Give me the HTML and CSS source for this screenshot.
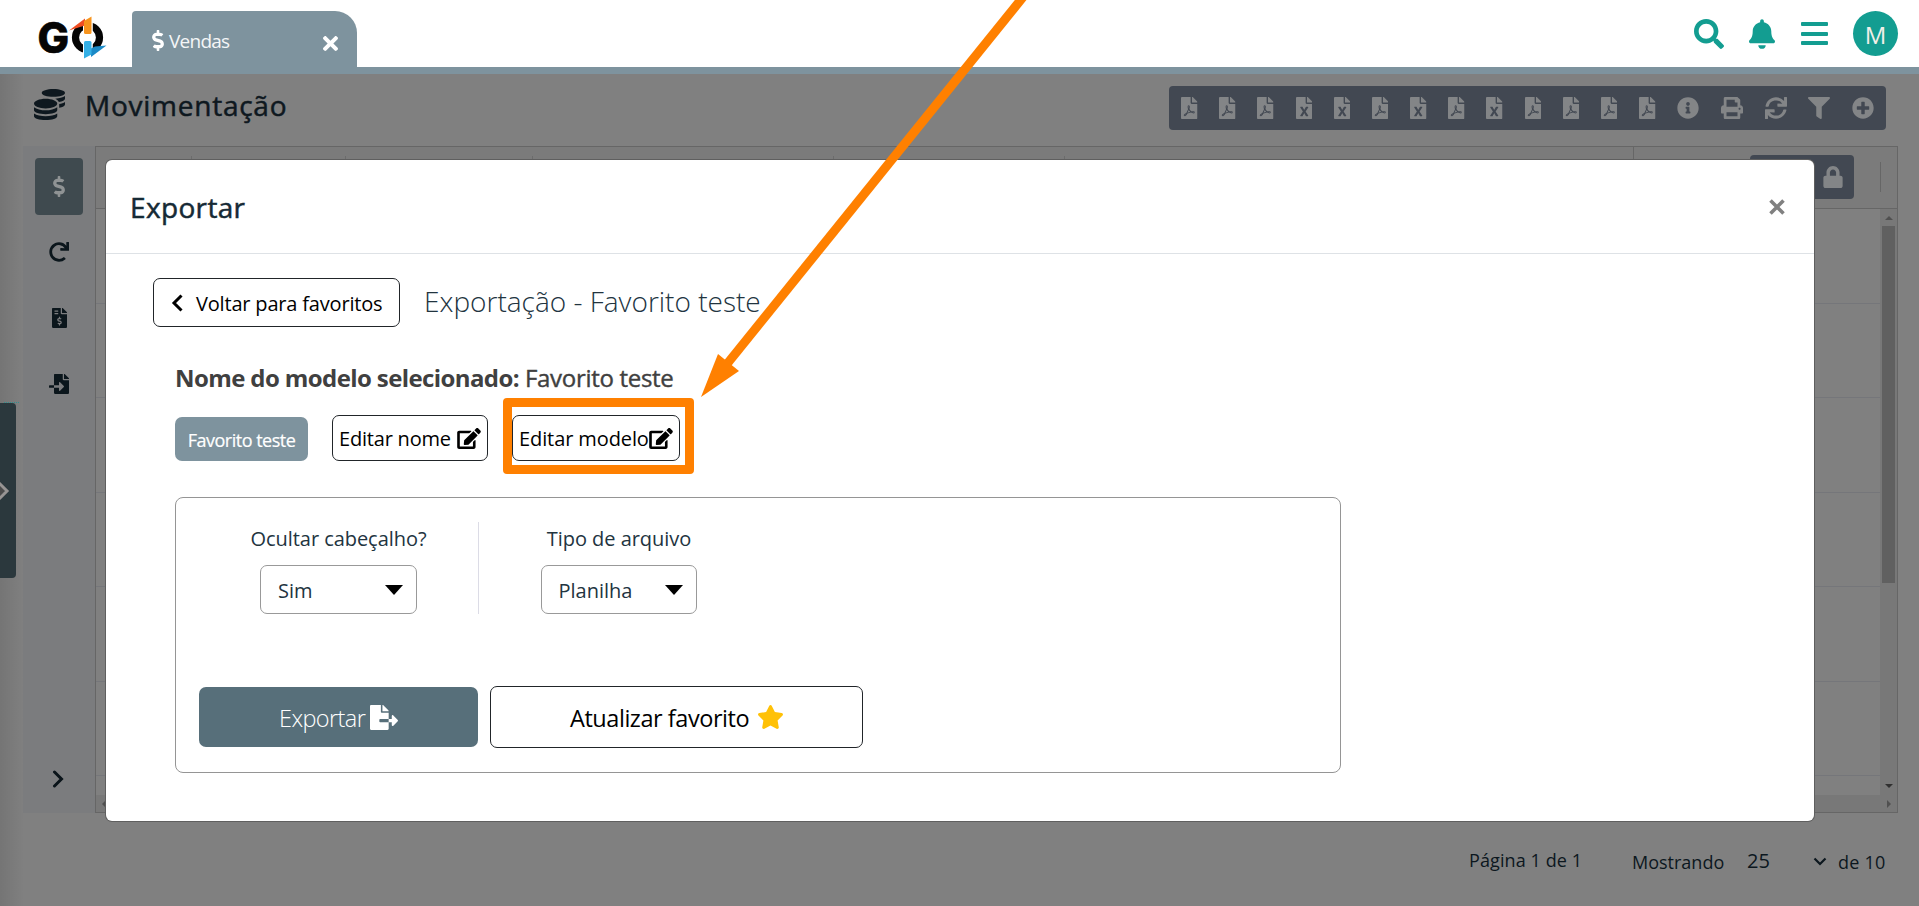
FILE: index.html
```html
<!DOCTYPE html>
<html lang="pt-BR">
<head>
<meta charset="utf-8">
<title>Vendas</title>
<link rel="stylesheet" href="styles.css">
</head>
<body>
<svg class="defs" width="0" height="0">
  <symbol id="pdf" viewBox="0 0 384 512"><path d="M181.9 256.1c-5-16-4.9-46.9-2-46.9 8.4 0 7.6 36.9 2 46.9zm-1.7 47.2c-7.7 20.2-17.3 43.3-28.4 62.7 18.3-7 39-17.2 62.9-21.9-12.7-9.6-24.9-23.4-34.5-40.8zM86.1 428.1c0 .8 13.2-5.4 34.9-40.2-6.7 6.3-29.1 24.5-34.9 40.2zM248 160h136v328c0 13.3-10.7 24-24 24H24c-13.3 0-24-10.7-24-24V24C0 10.7 10.7 0 24 0h200v136c0 13.2 10.8 24 24 24zm-8 171.8c-20-12.2-33.3-29-42.7-53.8 4.5-18.5 11.6-46.6 6.2-64.2-4.7-29.4-42.4-26.5-47.8-6.8-5 18.3-.4 44.1 8.1 77-11.6 27.6-28.7 64.6-40.8 85.8-.1 0-.1.1-.2.1-27.1 13.9-73.6 44.5-54.5 68 5.6 6.9 16 10 21.5 10 17.9 0 35.7-18 61.1-61.8 25.8-8.5 54.1-19.1 79-23.2 21.7 11.8 47.1 19.5 64 19.5 29.2 0 31.2-32 19.7-43.4-13.9-13.6-54.3-9.7-73.6-7.2zM377 105L279 7c-4.5-4.5-10.6-7-17-7h-6v128h128v-6.1c0-6.3-2.5-12.4-7-16.9zm-74.1 255.3c4.1-2.7-2.5-11.9-42.8-9 37.1 15.8 42.8 9 42.8 9z"/></symbol>
  <symbol id="xls" viewBox="0 0 384 512"><path d="M224 136V0H24C10.7 0 0 10.7 0 24v464c0 13.3 10.7 24 24 24h336c13.3 0 24-10.7 24-24V160H248c-13.2 0-24-10.8-24-24zm60.1 106.5L224 336l60.1 93.5c5.1 8-.6 18.5-10.1 18.5h-34.9c-4.4 0-8.5-2.4-10.6-6.3C208.9 405.5 192 373 192 373c-6.4 14.8-10 20-36.6 68.8-2.1 3.9-6.1 6.3-10.5 6.3H110c-9.5 0-15.2-10.5-10.1-18.5l60.3-93.5-60.3-93.5c-5.2-8 .6-18.5 10.1-18.5h34.8c4.4 0 8.5 2.4 10.6 6.3 26.1 48.8 20 33.6 36.6 68.5 0 0 6.1-11.7 36.6-68.5 2.1-3.9 6.2-6.3 10.6-6.3H274c9.5-.1 15.2 10.4 10.1 18.4zM384 121.9v6.1H256V0h6.1c6.4 0 12.5 2.5 17 7l97.9 98c4.5 4.5 7 10.6 7 16.9z"/></symbol>
  <symbol id="info" viewBox="0 0 512 512"><path d="M256 8C119.043 8 8 119.083 8 256c0 136.997 111.043 248 248 248s248-111.003 248-248C504 119.083 392.957 8 256 8zm0 110c23.196 0 42 18.804 42 42s-18.804 42-42 42-42-18.804-42-42 18.804-42 42-42zm56 254c0 6.627-5.373 12-12 12h-88c-6.627 0-12-5.373-12-12v-24c0-6.627 5.373-12 12-12h12v-64h-12c-6.627 0-12-5.373-12-12v-24c0-6.627 5.373-12 12-12h64c6.627 0 12 5.373 12 12v100h12c6.627 0 12 5.373 12 12v24z"/></symbol>
  <symbol id="print" viewBox="0 0 512 512"><path d="M448 192V77.25c0-8.49-3.37-16.62-9.37-22.63L393.37 9.37c-6-6-14.14-9.37-22.63-9.37H96C78.33 0 64 14.33 64 32v160c-35.35 0-64 28.65-64 64v112c0 8.84 7.16 16 16 16h48v96c0 17.67 14.33 32 32 32h320c17.67 0 32-14.33 32-32v-96h48c8.84 0 16-7.16 16-16V256c0-35.35-28.65-64-64-64zm-64 256H128v-96h256v96zm0-224H128V64h192v48c0 8.84 7.16 16 16 16h48v96zm48 72c-13.25 0-24-10.75-24-24 0-13.26 10.75-24 24-24s24 10.74 24 24c0 13.25-10.75 24-24 24z"/></symbol>
  <symbol id="sync" viewBox="0 0 512 512"><path d="M440.65 12.57l4 82.77A247.16 247.16 0 0 0 255.83 8C134.73 8 33.91 94.92 12.29 209.82A12 12 0 0 0 24.09 224h49.05a12 12 0 0 0 11.67-9.26 175.91 175.91 0 0 1 317-56.94l-101.46-4.86a12 12 0 0 0-12.57 12v47.41a12 12 0 0 0 12 12H500a12 12 0 0 0 12-12V12a12 12 0 0 0-12-12h-47.37a12 12 0 0 0-11.98 12.57zM255.83 432a175.61 175.61 0 0 1-146-77.8l101.8 4.87a12 12 0 0 0 12.57-12v-47.4a12 12 0 0 0-12-12H12a12 12 0 0 0-12 12V500a12 12 0 0 0 12 12h47.35a12 12 0 0 0 12-12.6l-4.15-82.57A247.17 247.17 0 0 0 255.83 504c121.11 0 221.93-86.92 243.55-201.82a12 12 0 0 0-11.8-14.18h-49.05a12 12 0 0 0-11.67 9.26A175.86 175.86 0 0 1 255.83 432z"/></symbol>
  <symbol id="redo" viewBox="0 0 512 512"><path d="M500.33 0h-47.41a12 12 0 0 0-12 12.57l4 82.76A247.42 247.42 0 0 0 256 8C119.34 8 7.9 119.53 8 256.19 8.1 393.07 119.1 504 256 504a247.1 247.1 0 0 0 166.18-63.91 12 12 0 0 0 .48-17.43l-34-34a12 12 0 0 0-16.38-.55A176 176 0 1 1 402.1 157.8l-101.53-4.87a12 12 0 0 0-12.57 12v47.41a12 12 0 0 0 12 12h200.33a12 12 0 0 0 12-12V12a12 12 0 0 0-12-12z"/></symbol>
  <symbol id="filter" viewBox="0 0 512 512"><path d="M487.976 0H24.028C2.71 0-8.047 25.866 7.058 40.971L192 225.941V432c0 7.831 3.821 15.17 10.237 19.662l80 55.98C298.02 518.69 320 507.493 320 487.98V225.941l184.947-184.97C520.021 25.896 509.338 0 487.976 0z"/></symbol>
  <symbol id="plus" viewBox="0 0 512 512"><path d="M256 8C119 8 8 119 8 256s111 248 248 248 248-111 248-248S393 8 256 8zm144 276c0 6.6-5.4 12-12 12h-92v92c0 6.6-5.4 12-12 12h-56c-6.6 0-12-5.4-12-12v-92h-92c-6.6 0-12-5.4-12-12v-56c0-6.6 5.4-12 12-12h92v-92c0-6.6 5.4-12 12-12h56c6.6 0 12 5.4 12 12v92h92c6.6 0 12 5.4 12 12v56z"/></symbol>
  <symbol id="lock" viewBox="0 0 448 512"><path d="M400 224h-24v-72C376 68.2 307.8 0 224 0S72 68.2 72 152v72H48c-26.5 0-48 21.5-48 48v192c0 26.5 21.5 48 48 48h352c26.5 0 48-21.5 48-48V272c0-26.5-21.5-48-48-48zm-104 0H152v-72c0-39.7 32.3-72 72-72s72 32.3 72 72v72z"/></symbol>
  <symbol id="search" viewBox="0 0 512 512"><path d="M505 442.7L405.3 343c-4.5-4.5-10.6-7-17-7H372c27.6-35.3 44-79.7 44-128C416 93.1 322.9 0 208 0S0 93.1 0 208s93.1 208 208 208c48.3 0 92.7-16.4 128-44v16.3c0 6.4 2.5 12.5 7 17l99.7 99.7c9.4 9.4 24.6 9.4 33.9 0l28.3-28.3c9.4-9.4 9.4-24.6.1-34zM208 336c-70.7 0-128-57.2-128-128 0-70.7 57.2-128 128-128 70.7 0 128 57.2 128 128 0 70.7-57.2 128-128 128z"/></symbol>
  <symbol id="bell" viewBox="0 0 448 512"><path d="M224 512c35.32 0 63.97-28.65 63.97-64H160.03c0 35.35 28.65 64 63.97 64zm215.39-149.71c-19.32-20.76-55.47-51.99-55.47-154.29 0-77.7-54.48-139.9-127.94-155.16V32c0-17.67-14.32-32-31.98-32s-31.98 14.33-31.98 32v20.84C118.56 68.1 64.08 130.3 64.08 208c0 102.3-36.15 133.53-55.47 154.29-6 6.45-8.66 14.16-8.61 21.71.11 16.4 12.98 32 32.1 32h383.8c19.12 0 32-15.6 32.1-32 .05-7.55-2.61-15.27-8.61-21.71z"/></symbol>
  <symbol id="edit" viewBox="0 0 576 512"><path d="M402.6 83.2l90.2 90.2c3.8 3.8 3.8 10 0 13.8L274.4 405.6l-92.8 10.3c-12.4 1.4-22.9-9.1-21.5-21.5l10.3-92.8L388.8 83.2c3.8-3.8 10-3.8 13.8 0zm162-22.9l-48.8-48.8c-15.2-15.2-39.9-15.2-55.2 0l-35.4 35.4c-3.8 3.8-3.8 10 0 13.8l90.2 90.2c3.8 3.8 10 3.8 13.8 0l35.4-35.4c15.2-15.3 15.2-40 0-55.2zM384 346.2V448H64V128h229.8c3.2 0 6.2-1.3 8.5-3.5l40-40c7.6-7.6 2.2-20.5-8.5-20.5H48C21.5 64 0 85.5 0 112v352c0 26.5 21.5 48 48 48h352c26.5 0 48-21.5 48-48V306.2c0-10.7-12.9-16-20.5-8.5l-40 40c-2.2 2.3-3.5 5.3-3.5 8.5z"/></symbol>
  <symbol id="export" viewBox="0 0 576 512"><path d="M384 121.9c0-6.3-2.5-12.4-7-16.9L279.1 7c-4.5-4.5-10.6-7-17-7H256v128h128zM571 308l-95.7-96.4c-10.1-10.1-27.4-3-27.4 11.3V288h-64v64h64v65.2c0 14.3 17.3 21.4 27.4 11.3L571 332c6.6-6.6 6.6-17.4 0-24zm-379 28v-32c0-8.8 7.2-16 16-16h176V160H248c-13.2 0-24-10.8-24-24V0H24C10.7 0 0 10.7 0 24v464c0 13.3 10.7 24 24 24h336c13.3 0 24-10.7 24-24V352H208c-8.8 0-16-7.2-16-16z"/></symbol>
  <symbol id="import" viewBox="0 0 512 512"><path d="M16 288c-8.8 0-16 7.2-16 16v32c0 8.8 7.2 16 16 16h112v-64zm489-183L407.1 7c-4.5-4.5-10.6-7-17-7H384v128h128v-6.1c0-6.3-2.5-12.4-7-16.9zm-153 31V0H152c-13.3 0-24 10.7-24 24v264h128v-65.2c0-14.3 17.3-21.4 27.4-11.3L379 308c6.6 6.7 6.6 17.4 0 24l-95.7 96.4c-10.1 10.1-27.4 3-27.4-11.3V352H128v136c0 13.3 10.7 24 24 24h336c13.3 0 24-10.7 24-24V160H376c-13.2 0-24-10.8-24-24z"/></symbol>
  <symbol id="invoice" viewBox="0 0 384 512"><path d="M377 105L279.1 7c-4.5-4.5-10.6-7-17-7H256v128h128v-6.1c0-6.3-2.5-12.4-7-16.9zm-153 31V0H24C10.7 0 0 10.7 0 24v464c0 13.3 10.7 24 24 24h336c13.3 0 24-10.7 24-24V160H248c-13.2 0-24-10.8-24-24zM64 72c0-4.42 3.58-8 8-8h80c4.42 0 8 3.58 8 8v16c0 4.42-3.58 8-8 8H72c-4.42 0-8-3.58-8-8V72zm0 80v-16c0-4.42 3.58-8 8-8h80c4.42 0 8 3.58 8 8v16c0 4.42-3.58 8-8 8H72c-4.42 0-8-3.58-8-8zm144 263.88V440c0 4.42-3.58 8-8 8h-16c-4.42 0-8-3.58-8-8v-24.29c-11.29-.58-22.27-4.52-31.37-11.35-3.9-2.93-4.1-8.77-.57-12.14l11.75-11.21c2.77-2.64 6.89-2.76 10.13-.73 3.87 2.42 8.26 3.72 12.82 3.72h28.11c6.5 0 11.8-5.92 11.8-13.19 0-5.95-3.61-11.19-8.77-12.73l-45-13.5c-18.59-5.58-31.58-23.42-31.58-43.39 0-24.52 19.05-44.44 42.67-45.07V232c0-4.42 3.58-8 8-8h16c4.42 0 8 3.58 8 8v24.29c11.29.58 22.27 4.51 31.37 11.35 3.9 2.93 4.1 8.77.57 12.14l-11.75 11.21c-2.77 2.64-6.89 2.76-10.13.73-3.87-2.43-8.26-3.72-12.82-3.72h-28.11c-6.5 0-11.8 5.92-11.8 13.19 0 5.95 3.61 11.19 8.77 12.73l45 13.5c18.59 5.58 31.58 23.42 31.58 43.39 0 24.53-19.05 44.44-42.67 45.07z"/></symbol>
  <symbol id="dollar" viewBox="0 0 288 512"><path d="M209.2 233.4l-108-31.6C88.7 198.2 80 186.5 80 173.5c0-16.3 13.2-29.5 29.5-29.5h66.3c12.2 0 24.2 3.7 34.2 10.5 6.1 4.1 14.3 3.1 19.5-2l34.8-34c7.1-6.9 6.1-18.4-1.8-24.5C238 74.8 207.4 64.1 176 64V16c0-8.8-7.2-16-16-16h-32c-8.8 0-16 7.2-16 16v48h-2.5C45.8 64-5.4 118.7.5 183.6c4.2 46.1 39.4 83.6 83.8 96.6l102.5 30c12.5 3.7 21.2 15.3 21.2 28.3 0 16.3-13.2 29.5-29.5 29.5h-66.3C100 368 88 364.3 78 357.5c-6.1-4.1-14.3-3.1-19.5 2l-34.8 34c-7.1 6.9-6.1 18.4 1.8 24.5 24.5 19.2 55.1 29.9 86.5 30v48c0 8.8 7.2 16 16 16h32c8.8 0 16-7.2 16-16v-48.2c46.6-.9 90.3-28.6 105.7-72.7 21.5-61.6-14.6-124.8-72.5-141.7z"/></symbol>
  <symbol id="times" viewBox="0 80 352 352"><path d="M242.72 256l100.07-100.07c12.28-12.28 12.28-32.19 0-44.48l-22.24-22.24c-12.28-12.28-32.19-12.28-44.48 0L176 189.28 75.93 89.21c-12.28-12.28-32.19-12.28-44.48 0L9.21 111.45c-12.28 12.28-12.28 32.19 0 44.48L109.28 256 9.21 356.07c-12.28 12.28-12.28 32.19 0 44.48l22.24 22.24c12.28 12.28 32.2 12.28 44.48 0L176 322.72l100.07 100.07c12.28 12.28 32.2 12.28 44.48 0l22.24-22.24c12.28-12.28 12.28-32.19 0-44.48L242.72 256z"/></symbol>
  <symbol id="star" viewBox="20 0 536 512"><path d="M259.3 17.8L194 150.2 47.9 171.5c-26.2 3.8-36.7 36.1-17.7 54.6l105.7 103-25 145.5c-4.5 26.3 23.2 46 46.4 33.7L288 439.6l130.7 68.7c23.2 12.2 50.9-7.4 46.4-33.7l-25-145.5 105.7-103c19-18.5 8.5-50.8-17.7-54.6L382 150.2 316.7 17.8c-11.7-23.6-45.6-23.9-57.4 0z"/></symbol>
  <symbol id="coins" viewBox="0 0 512 512"><path d="M0 405.3V448c0 35.3 86 64 192 64s192-28.7 192-64v-42.7C342.7 434.4 267.2 448 192 448S41.3 434.4 0 405.3zM320 128c106 0 192-28.7 192-64S426 0 320 0 128 28.7 128 64s86 64 192 64zM0 300.4V352c0 35.3 86 64 192 64s192-28.7 192-64v-51.6c-41.3 34-116.9 51.6-192 51.6S41.3 334.4 0 300.4zm416 11c57.3-11.1 96-31.7 96-55.4v-42.7c-23.2 16.4-57.3 27.6-96 34.5v63.6zM192 160C86 160 0 195.8 0 240s86 80 192 80 192-35.8 192-80-86-80-192-80zm219.3 56.3c60-10.8 100.7-32 100.7-56.3v-42.7c-35.5 25.1-96.5 38.6-160.7 41.8 29.5 14.3 51.2 33.5 60 57.2z"/></symbol>
</svg>

<header class="topbar">
  <svg class="logo" width="74" height="54" viewBox="-4 0 74 54">
    <text x="-0.500" y="40" class="logo-text">G</text>
    <circle cx="49.500" cy="24.500" r="12" fill="none" stroke="#050505" stroke-width="7.200"/>
    <path d="M45 3h9.800v22H45zM45 26h9.800v18H45z" fill="#fff"/>
    <path d="M31 17.500L47 5.500v7L42 14z" fill="#f04e23"/>
    <path d="M53.500 3.500L46 8v11.500a1.500 1.500 0 0 0 1.500 1.500H52a1.500 1.500 0 0 0 1.500-1.500z" fill="#f7941d"/>
    <path d="M68.500 32.500L53 44v-8.500l4-2z" fill="#1b8ac7"/>
    <path d="M46 45.500L53.500 41.500V29.500A1.500 1.500 0 0 0 52 28h-4.500a1.500 1.500 0 0 0-1.500 1.500z" fill="#35b0e6"/>
  </svg>
  <div class="tab">
    <svg class="i-dollar"><use href="#dollar"/></svg>
    <span class="tab-name">Vendas</span>
    <svg class="i-tabclose"><use href="#times"/></svg>
  </div>
  <div class="actions">
    <svg class="i-search"><use href="#search"/></svg>
    <svg class="i-bell"><use href="#bell"/></svg>
    <div class="burger"><i></i><i></i><i></i></div>
    <div class="avatar">M</div>
  </div>
</header>

<main class="page">
  <div class="titlebar">
    <svg class="i-coins"><use href="#coins"/></svg>
    <h1>Movimentação</h1>
    <div class="tools">
      <svg class="f"><use href="#pdf"/></svg><svg class="f"><use href="#pdf"/></svg><svg class="f"><use href="#pdf"/></svg><svg class="f"><use href="#xls"/></svg><svg class="f"><use href="#xls"/></svg><svg class="f"><use href="#pdf"/></svg><svg class="f"><use href="#xls"/></svg><svg class="f"><use href="#pdf"/></svg><svg class="f"><use href="#xls"/></svg><svg class="f"><use href="#pdf"/></svg><svg class="f"><use href="#pdf"/></svg><svg class="f"><use href="#pdf"/></svg><svg class="f"><use href="#pdf"/></svg><svg class="w"><use href="#info"/></svg><svg class="w"><use href="#print"/></svg><svg class="w"><use href="#sync"/></svg><svg class="w"><use href="#filter"/></svg><svg class="w"><use href="#plus"/></svg>
    </div>
  </div>

  <div class="workspace">
    <nav class="rail">
      <div class="rail-active"><svg class="i-raildollar"><use href="#dollar"/></svg></div>
      <div class="rail-item"><svg class="sq"><use href="#redo"/></svg></div>
      <div class="rail-item"><svg class="inv"><use href="#invoice"/></svg></div>
      <div class="rail-item"><svg class="sq"><use href="#import"/></svg></div>
      <svg class="rail-chevron" viewBox="0 0 12 18"><path d="M2.500 2l7 7-7 7" fill="none" stroke="#0a141a" stroke-width="3" stroke-linecap="round"/></svg>
    </nav>
    <section class="grid">
      <div class="grid-head">
        <div class="c c1"></div><div class="c c2"></div><div class="c c3"></div><div class="c c4"></div><div class="c c5"></div><div class="c last"></div>
        <div class="locks"><svg class="i-lock"><use href="#lock"/></svg></div>
        <div class="sep"></div>
      </div>
      <div class="grid-body">
        <div class="rows"><div></div><div></div><div></div><div></div><div></div><div></div></div>
        <div class="vscroll"><b class="up"></b><div class="thumb"></div><b class="down"></b></div>
      </div>
      <div class="hscroll"><b class="left"></b><b class="right"></b></div>
    </section>
  </div>

  <footer class="pager">
    <span class="p1">Página 1 de 1</span><span class="p2">Mostrando</span><span class="p3">25</span>
    <svg class="p4" viewBox="0 0 14 9"><path d="M1.500 1.500L7 7l5.500-5.500" fill="none" stroke="#0c171e" stroke-width="2.200"/></svg>
    <span class="p5">de 10</span>
  </footer>
</main>

<div class="edge"></div>
<div class="dots"></div>
<div class="handle"><svg width="12" height="24" viewBox="0 0 12 24"><path d="M-2 4.500L5 12l-7 7.500z" fill="#4b4b4b"/><path d="M-1 4l8 8-8 8" fill="none" stroke="#979493" stroke-width="3"/></svg></div>

<div class="modal">
  <div class="modal-head"><h2>Exportar</h2><svg class="i-close" viewBox="0 0 16 16"><path d="M1.500 1.500l13 13m0-13l-13 13" stroke="#808080" stroke-width="3.600"/></svg></div>
  <div class="modal-body">
    <div class="row-back">
      <button class="btn back"><svg width="12" height="18" viewBox="0 0 12 18"><path d="M10.500 1.500L3 9l7.500 7.500" fill="none" stroke="#000" stroke-width="3"/></svg><span>Voltar para favoritos</span></button>
      <span class="sub">Exportação - Favorito teste</span>
    </div>
    <p class="model"><b>Nome do modelo selecionado:</b><span>Favorito teste</span></p>
    <div class="row-edit">
      <button class="fav">Favorito teste</button>
      <button class="btn ed1"><span>Editar nome</span><svg class="i-edit"><use href="#edit"/></svg></button>
      <button class="btn ed2"><span>Editar modelo</span><svg class="i-edit"><use href="#edit"/></svg></button>
    </div>
    <div class="panel">
      <div class="fields">
        <div class="field one"><label>Ocultar cabeçalho?</label><div class="select"><span>Sim</span><i></i></div></div>
        <div class="field two"><label>Tipo de arquivo</label><div class="select"><span>Planilha</span><i></i></div></div>
      </div>
      <div class="buttons">
        <button class="export"><span>Exportar</span><svg class="i-export"><use href="#export"/></svg></button>
        <button class="btn update"><span>Atualizar favorito</span><svg class="i-star"><use href="#star"/></svg></button>
      </div>
    </div>
  </div>
</div>

<div class="highlight"></div>
<svg class="arrow" width="340" height="400" viewBox="700 0 340 400"><path d="M727 364L1025.500 -6" stroke="#ff8000" stroke-width="9"/><path d="M701 397L718 354 739 371z" fill="#ff8000"/></svg>
</body>
</html>
```
FILE: styles.css
```css
* { box-sizing: border-box; }
body { margin: 0; width: 1919px; height: 906px; overflow: hidden; position: relative; background: #808080; font-family: "Open Sans", "Noto Sans", sans-serif; }
svg { display: block; fill: currentColor; flex: none; }
span, h1, h2, label, b { white-space: nowrap; }
button { font-family: inherit; padding: 0; margin: 0; display: flex; align-items: center; }
.defs { position: absolute; }

.topbar { height: 74px; background: #fff; border-bottom: 7px solid #7e939e; display: flex; align-items: flex-start; padding-left: 34px; }
.logo { margin-top: 13px; }
.logo-text { font: 800 42px Inter, sans-serif; fill: #050505; stroke: #050505; stroke-width: .6px; }
.tab { margin-left: 24px; width: 225px; height: 56px; margin-top: 11px; background: #7e939e; border-radius: 4px 22px 0 0; color: #fff; display: flex; align-items: center; padding: 4px 19px 0 20px; }
.i-dollar { width: 12px; height: 21px; margin-top: -1px; }
.tab-name { font-size: 19px; letter-spacing: -0.75px; margin-left: 5px; margin-top: 0; color: #f4f6f7; }
.i-tabclose { width: 15px; height: 15px; margin-left: auto; margin-top: 5px; }
.actions { margin-left: auto; margin-right: 21px; margin-top: 11px; height: 45px; display: flex; align-items: center; color: #139d91; }
.i-search { width: 30px; height: 30px; margin-right: 25px; }
.i-bell { width: 26px; height: 30px; margin-right: 26px; }
.burger { width: 27px; height: 23px; display: flex; flex-direction: column; justify-content: space-between; margin-right: 25px; }
.burger i { height: 4px; background: #139d91; border-radius: 1px; }
.avatar { width: 45px; height: 45px; border-radius: 50%; background: #139d91; color: #f2efe8; font-size: 24px; line-height: 47px; text-align: center; }

.page { height: 832px; padding-left: 23px; }
.titlebar { height: 72px; display: flex; padding-left: 11px; color: #0e181f; }
.i-coins { width: 31px; height: 31px; margin-top: 15px; }
h1 { margin: 12px 0 0 20px; font-size: 28px; line-height: 38px; font-weight: 500; letter-spacing: 0.75px; -webkit-text-stroke: .5px currentColor; }
.tools { margin: 12px 33px 0 auto; width: 717px; height: 44px; background: #424852; border-radius: 4px; display: flex; align-items: center; justify-content: space-between; padding: 0 12px; color: #838587; }
.f { width: 16.5px; height: 22px; }
.w { width: 22px; height: 22px; }
.workspace { display: flex; height: 667px; }
.rail { width: 72px; height: 667px; background: #7b7c7e; display: flex; flex-direction: column; align-items: center; color: #0b161c; padding-top: 12px; }
.rail-active { width: 48px; height: 57px; border-radius: 4px; background: #3f4a4f; color: #8f9394; display: grid; place-items: center; }
.i-raildollar { width: 12px; height: 21px; }
.rail-item { height: 66px; display: grid; place-items: center; }
.rail-active + .rail-item { margin-top: 4px; }
.sq { width: 20px; height: 20px; }
.inv { width: 15px; height: 20px; }
.rail-chevron { width: 12px; height: 18px; margin: auto 3px 25px 0; }
.grid { width: 1803px; border: 1px solid #666; display: flex; flex-direction: column; }
.grid-head { height: 62px; background: #7b7b7b; border-bottom: 1px solid #666; display: flex; align-items: flex-start; }
.c { height: 52px; margin-top: 9px; border-right: 1px solid #6c6c6c; }
.c1 { width: 96px; } .c2 { width: 154px; } .c3 { width: 187px; } .c4 { width: 301px; } .c5 { width: 231px; }
.last { width: 569px; margin-top: 0; height: 61px; border-color: #666; }
.locks { margin: 8px 0 0 116px; width: 104px; height: 44px; border-radius: 4px; background: #424852; color: #838587; display: flex; align-items: center; justify-content: flex-end; padding-right: 11px; }
.i-lock { width: 20px; height: 22px; }
.sep { margin: 15px 0 0 26px; width: 1px; height: 30px; background: #666; }
.grid-body { flex: 1; display: flex; }
.rows { flex: 1; }
.rows div { height: 94.5px; border-bottom: 1px solid #75767a; }
.vscroll { width: 17px; background: #787878; display: flex; flex-direction: column; align-items: center; }
.thumb { width: 13px; height: 357px; background: #606060; }
.up { border: 4px solid transparent; border-top: 0; border-bottom-color: #505050; margin: 7px 0 6px; }
.down { border: 4px solid transparent; border-bottom: 0; border-top-color: #303030; margin: auto 0 7px; }
.hscroll { height: 17px; background: #787878; display: flex; align-items: center; justify-content: space-between; padding: 0 6px; }
.left { border: 4px solid transparent; border-left: 0; border-right-color: #505050; }
.right { border: 4px solid transparent; border-right: 0; border-left-color: #505050; }
.pager { display: flex; color: #0c171e; font-size: 18px; line-height: 24px; padding: 35px 0 0 1446px; }
.p1 { width: 163px; margin-top: 0; letter-spacing: 0.1px; }
.p2 { width: 115px; margin-top: 2px; }
.p3 { width: 66px; font-size: 20px; margin-top: 1px; letter-spacing: 0; }
.p4 { width: 14px; height: 9px; margin-top: 9px; }
.p5 { margin: 2px 0 0 11px; letter-spacing: 0.2px; }

/* Left drawer */
.edge { position: absolute; left: 0; top: 74px; width: 24px; height: 832px; background: linear-gradient(90deg, rgba(0,0,0,.09), transparent); }
.dots { position: absolute; left: 4px; top: 402px; width: 15px; border-top: 1px dotted #2f8f8f; }
.handle { position: absolute; left: 0; top: 403px; width: 16px; height: 175px; background: #2b383d; border-radius: 0 4px 4px 0; display: flex; align-items: center; }

.modal { position: absolute; left: 106px; top: 160px; width: 1708px; height: 661px; background: #fff; border-radius: 6px; box-shadow: 0 0 0 1px #5f5f5f; }
.modal-head { height: 94px; border-bottom: 1px solid #dee2e6; display: flex; justify-content: space-between; padding: 0 29px 0 24px; }
h2 { margin: 28px 0 0; font-size: 28px; line-height: 38px; font-weight: 500; color: #162a35; letter-spacing: 0.35px; -webkit-text-stroke: .5px currentColor; }
.i-close { width: 16px; height: 16px; margin-top: 39px; }
.modal-body { padding: 24px 0 0 47px; }
.btn { background: #fff; border: 1px solid #212529; border-radius: 7px; color: #000; }
.row-back { display: flex; height: 49px; }
.back { width: 247px; padding-left: 17px; font-size: 20px; letter-spacing: -0.18px; }
.back span { margin: 2px 0 0 13px; }
.sub { margin: 4px 0 0 24px; font-size: 28px; line-height: 38px; font-weight: 300; color: #22343f; }
.model { margin: 35px 0 0 22px; height: 36px; display: flex; font-size: 24px; line-height: 32px; color: #404040; }
.model b { width: 350px; letter-spacing: -0.6px; }
.model span { letter-spacing: -0.3px; -webkit-text-stroke: .4px currentColor; }
.row-edit { display: flex; margin: 17px 0 0 22px; height: 46px; }
.fav { margin-top: 2px; width: 133px; height: 44px; padding-top: 1px; background: #7e939e; color: #fff; border: 0; border-radius: 7px; font-size: 18px; letter-spacing: -0.5px; -webkit-text-stroke: .2px currentColor; justify-content: center; }
.ed1 { width: 156px; margin-left: 24px; font-size: 20px; padding-left: 6px; letter-spacing: -0.2px; }
.ed1 span { width: 118px; text-align: left; }
.ed2 { width: 168px; margin-left: 24px; font-size: 20px; padding-left: 6px; letter-spacing: -0.1px; }
.ed2 span { width: 130px; text-align: left; }
.i-edit { width: 24px; height: 21px; }
.panel { margin: 36px 0 0 22px; width: 1166px; height: 276px; border: 1px solid #959595; border-radius: 8px; padding: 24px 0 0 23px; }
.fields { display: flex; height: 92px; }
.field { display: flex; flex-direction: column; align-items: center; color: #22343f; font-size: 20px; }
.field label { line-height: 28px; height: 43px; padding-top: 3px; letter-spacing: -0.05px; }
.one { width: 280px; border-right: 1px solid #dcdce6; }
.two { width: 280px; }
.select { width: 157px; height: 49px; border: 1px solid #999; border-radius: 7px; display: flex; align-items: center; justify-content: space-between; padding: 0 13px 0 17px; }
.select span { margin-top: 1px; }
.two .select { width: 156px; margin-right: 1px; }
.select i { border: 9.500px solid transparent; border-top: 10px solid #000; border-bottom: 0; }
.buttons { display: flex; margin-top: 72px; height: 62px; align-items: center; }
.export { width: 279px; height: 60px; background: #576f7a; border: 0; border-radius: 7px; color: #fff; font-size: 23.500px; letter-spacing: -0.6px; font-weight: 300; padding-left: 80px; }
.export span { width: 91px; text-align: left; margin-top: 1px; }
.i-export { width: 28px; height: 25px; }
.update { width: 373px; height: 62px; margin-left: 12px; font-size: 23.500px; letter-spacing: -0.45px; padding-left: 79px; }
.update span { width: 188px; text-align: left; margin-top: 1px; }
.i-star { width: 25px; height: 24px; color: #ffc107; }

.highlight { position: absolute; left: 503px; top: 398px; width: 191px; height: 76px; border: 9px solid #ff8000; border-radius: 4px; }
.arrow { position: absolute; left: 700px; top: 0; }
```
